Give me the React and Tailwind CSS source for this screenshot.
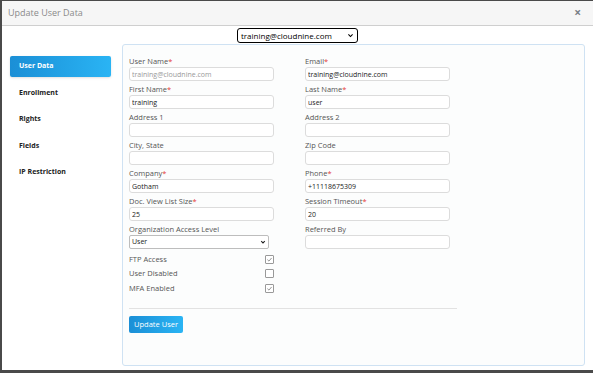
import { useState } from 'react';

const tabs = ['User Data', 'Enrollment', 'Rights', 'Fields', 'IP Restriction'];

const rows = [
  [
    { label: 'User Name', req: true, value: 'training@cloudnine.com', disabled: true },
    { label: 'Email', req: true, value: 'training@cloudnine.com' },
  ],
  [
    { label: 'First Name', req: true, value: 'training' },
    { label: 'Last Name', req: true, value: 'user' },
  ],
  [{ label: 'Address 1' }, { label: 'Address 2' }],
  [{ label: 'City, State' }, { label: 'Zip Code' }],
  [
    { label: 'Company', req: true, value: 'Gotham' },
    { label: 'Phone', req: true, value: '+11118675309' },
  ],
  [
    { label: 'Doc. View List Size', req: true, value: '25' },
    { label: 'Session Timeout', req: true, value: '20' },
  ],
];

function Field({ label, req, value = '', disabled }) {
  return (
    <div className="flex flex-col w-[145px]">
      <label className="text-[7.5px] leading-[9px] text-[#555] mb-[1px]">
        {label}
        {req && <span className="text-[#e53935]">*</span>}
      </label>
      <input
        readOnly
        value={value}
        className={`h-[14px] w-full border border-[#dcdcdc] rounded-[3px] bg-white px-[2px] text-[7px] outline-none ${disabled ? 'text-[#999]' : 'text-[#222]'}`}
      />
    </div>
  );
}

function Check({ label, checked }) {
  return (
    <div className="flex items-center justify-between w-[145px] h-[14.5px]">
      <span className="text-[7.5px] text-[#555]">{label}</span>
      <span className="w-[9px] h-[9px] border border-[#999] rounded-[1px] bg-white flex items-center justify-center">
        {checked && (
          <svg viewBox="0 0 10 10" className="w-[7px] h-[7px]">
            <path d="M2 5.2 L4.2 7.3 L8 2.8" fill="none" stroke="#888" strokeWidth="1.3" />
          </svg>
        )}
      </span>
    </div>
  );
}

export default function App() {
  const [active, setActive] = useState('User Data');

  return (
    <div
      className="w-[593px] h-[373px] bg-white border-l-[2px] border-t-[1px] border-b-[3px] border-[#4a4a4a] flex flex-col overflow-hidden"
      style={{ fontFamily: '"Open Sans", "Noto Sans", sans-serif' }}
    >
      {/* Header */}
      <div className="h-[25px] shrink-0 bg-[#f6f6f6] border-b border-[#cfcfcf] flex items-center justify-between pl-[6px] pr-[12px]">
        <span className="text-[9px] text-[#8a8a8a]">Update User Data</span>
        <span className="text-[12px] font-bold text-[#7a7f86] leading-none">×</span>
      </div>

      {/* Account select */}
      <div className="flex justify-center pt-[2px] pb-[1px]">
        <div className="w-[121px] h-[15px] border border-black rounded-[3px] flex items-center justify-between px-[3px] bg-white">
          <span className="text-[8px] text-black">training@cloudnine.com</span>
          <svg viewBox="0 0 10 10" className="w-[7px] h-[7px]">
            <path d="M2 3.5 L5 6.5 L8 3.5" fill="none" stroke="#000" strokeWidth="1.6" />
          </svg>
        </div>
      </div>

      <div className="flex flex-1 pl-[8px] pr-[8px] pb-[4px]">
        {/* Sidebar */}
        <div className="w-[101px] pt-[12px] flex flex-col gap-[5.5px]">
          {tabs.map((t) => (
            <button
              key={t}
              onClick={() => setActive(t)}
              className={`h-[21px] rounded-[2px] text-left pl-[9px] text-[7px] font-bold ${
                active === t
                  ? 'bg-gradient-to-r from-[#1b8fd6] to-[#2ab4f4] text-white shadow-sm'
                  : 'text-[#222]'
              }`}
            >
              {t}
            </button>
          ))}
        </div>

        {/* Form panel */}
        <div className="ml-[11px] flex-1 border border-[#cfe2f3] rounded-[3px] bg-[#fcfdfd] pl-[6px] pt-[12px]">
          <div className="flex flex-col gap-[4px]">
            {rows.map((r, i) => (
              <div key={i} className="flex gap-[31px]">
                {r.map((f) => (
                  <Field key={f.label} {...f} />
                ))}
              </div>
            ))}
            <div className="flex gap-[31px]">
              <div className="flex flex-col w-[145px]">
                <label className="text-[7.5px] leading-[9px] text-[#555] mb-[1px]">Organization Access Level</label>
                <div className="h-[14px] w-[140px] border border-[#bdbdbd] rounded-[2px] bg-white flex items-center justify-between px-[2px]">
                  <span className="text-[7px] text-[#222]">User</span>
                  <svg viewBox="0 0 10 10" className="w-[6px] h-[6px]">
                    <path d="M2 3.5 L5 6.5 L8 3.5" fill="none" stroke="#222" strokeWidth="1.8" />
                  </svg>
                </div>
              </div>
              <Field label="Referred By" />
            </div>
          </div>

          <div className="mt-[3px] flex flex-col">
            <Check label="FTP Access" checked />
            <Check label="User Disabled" />
            <Check label="MFA Enabled" checked />
          </div>

          <div className="w-[328px] border-t border-[#e2e2e2] mt-[12px]" />

          <button className="mt-[5px] h-[17px] w-[54px] rounded-[2px] bg-gradient-to-r from-[#1b8fd6] to-[#2ab4f4] text-white text-[7.5px]">
            Update User
          </button>
        </div>
      </div>
    </div>
  );
}
